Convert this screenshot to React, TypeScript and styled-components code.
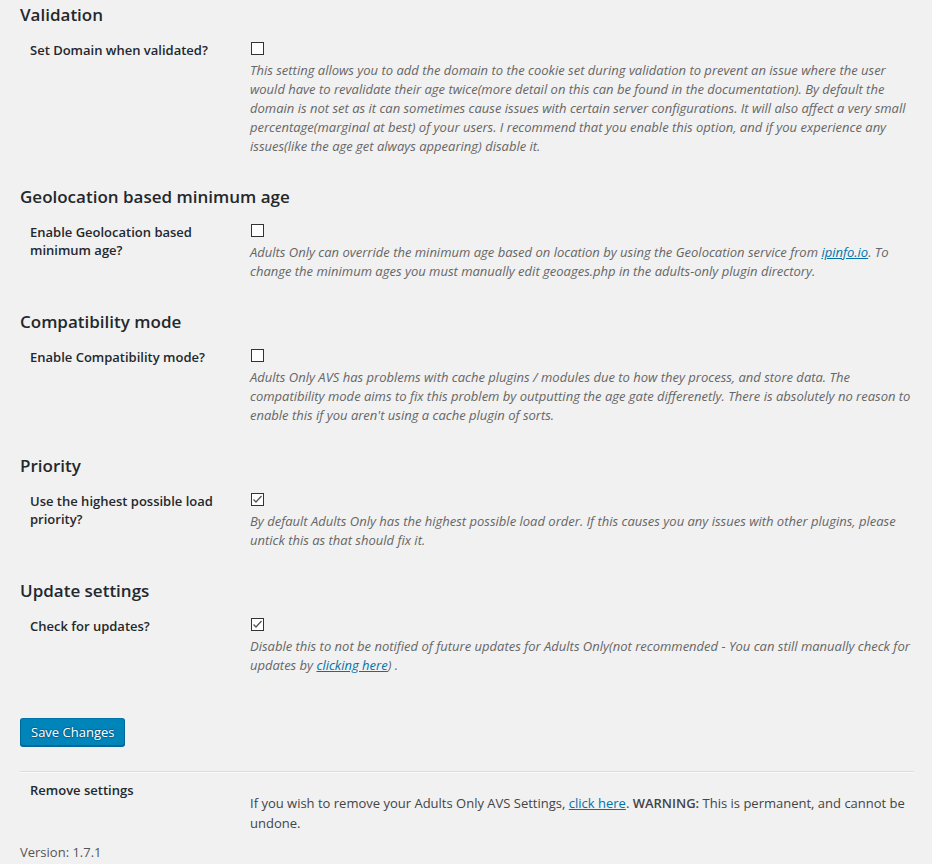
import React from 'react';
import styled, {createGlobalStyle} from 'styled-components';

const GlobalStyle = createGlobalStyle`
  html, body {
    margin: 0;
    padding: 0;
    background: #f1f1f1;
  }
  body {
    font-family: "Open Sans", "Liberation Sans", sans-serif;
    font-size: 13px;
    color: #444;
  }
`;

const Link = styled.a`
  color: #0073aa;
  text-decoration: underline;
`;

interface Setting {
    title: string,
    label: string,
    checked: boolean,
    description: React.ReactNode
}

const settings: Setting[] = [
    {
        title: 'Validation',
        label: 'Set Domain when validated?',
        checked: false,
        description: <>This setting allows you to add the domain to the cookie set during validation to prevent an issue where the user would have to revalidate their age twice(more detail on this can be found in the documentation). By default the domain is not set as it can sometimes cause issues with certain server configurations. It will also affect a very small percentage(marginal at best) of your users. I recommend that you enable this option, and if you experience any issues(like the age get always appearing) disable it.</>
    },
    {
        title: 'Geolocation based minimum age',
        label: 'Enable Geolocation based minimum age?',
        checked: false,
        description: <>Adults Only can override the minimum age based on location by using the Geolocation service from <Link href="#">ipinfo.io</Link>. To change the minimum ages you must manually edit geoages.php in the adults-only plugin directory.</>
    },
    {
        title: 'Compatibility mode',
        label: 'Enable Compatibility mode?',
        checked: false,
        description: <>Adults Only AVS has problems with cache plugins / modules due to how they process, and store data. The compatibility mode aims to fix this problem by outputting the age gate differenetly. There is absolutely no reason to enable this if you aren't using a cache plugin of sorts.</>
    },
    {
        title: 'Priority',
        label: 'Use the highest possible load priority?',
        checked: true,
        description: <>By default Adults Only has the highest possible load order. If this causes you any issues with other plugins, please untick this as that should fix it.</>
    },
    {
        title: 'Update settings',
        label: 'Check for updates?',
        checked: true,
        description: <>Disable this to not be notified of future updates for Adults Only(not recommended - You can still manually check for updates by <Link href="#">clicking here</Link>) .</>
    }
];

const Checkbox: React.FC<{checked: boolean}> = ({checked}) => (
    <StyledCheckbox>
        {checked &&
            <svg width="11" height="11" viewBox="0 0 11 11">
                <polyline points="1.5,5.5 4,8 9.5,2" fill="none" stroke="#555" strokeWidth="1.3"/>
            </svg>
        }
    </StyledCheckbox>
);

const App: React.FC = () => {
    return (
        <StyledPage>
            <GlobalStyle/>
            {settings.map((s, i) => (
                <section key={s.title}>
                    <StyledHeading $first={i === 0}>{s.title}</StyledHeading>
                    <StyledRow>
                        <StyledLabel>{s.label}</StyledLabel>
                        <StyledField>
                            <Checkbox checked={s.checked}/>
                            <StyledDescription>{s.description}</StyledDescription>
                        </StyledField>
                    </StyledRow>
                </section>
            ))}
            <StyledButton type="button">Save Changes</StyledButton>
            <StyledDivider/>
            <StyledRemoveRow>
                <StyledLabel>Remove settings</StyledLabel>
                <StyledRemoveText>
                    If you wish to remove your Adults Only AVS Settings, <Link href="#">click here</Link>. <strong>WARNING:</strong> This is permanent, and cannot be undone.
                </StyledRemoveText>
            </StyledRemoveRow>
            <StyledVersion>Version: 1.7.1</StyledVersion>
        </StyledPage>
    )
}

const StyledPage = styled.div`
  padding: 0 18px 12px 20px;
`;

const StyledHeading = styled.h2<{$first?: boolean}>`
  margin: ${props => props.$first ? '4px' : '30px'} 0 0 0;
  font-size: 17px;
  line-height: 22px;
  font-weight: 600;
  color: #23282d;
`;

const StyledRow = styled.div`
  display: flex;
  padding-top: 15px;
`;

const StyledLabel = styled.div`
  width: 200px;
  flex-shrink: 0;
  padding: 0 10px;
  font-size: 13px;
  line-height: 18px;
  font-weight: 600;
  color: #23282d;
`;

const StyledField = styled.div`
  flex: 1;
  padding-left: 10px;
`;

const StyledCheckbox = styled.span`
  display: flex;
  align-items: center;
  justify-content: center;
  box-sizing: border-box;
  width: 13px;
  height: 13px;
  margin: 1px 0 0 1px;
  border: 1px solid #333;
  background: #fff;
`;

const StyledDescription = styled.p`
  margin: 6px 0 0 0;
  font-size: 13px;
  line-height: 19px;
  font-style: italic;
  color: #666;
`;

const StyledButton = styled.button`
  display: block;
  margin-top: 43px;
  height: 28px;
  padding: 0 10px 1px;
  font-family: "Open Sans", "Liberation Sans", sans-serif;
  font-size: 13px;
  line-height: 26px;
  color: #fff;
  background: #0085ba;
  border: 1px solid;
  border-color: #0073aa #006799 #006799;
  border-radius: 3px;
  box-shadow: 0 1px 0 #006799;
  text-shadow: 0 -1px 1px #006799, 1px 0 1px #006799, 0 1px 1px #006799, -1px 0 1px #006799;
`;

const StyledDivider = styled.hr`
  margin: 25px 0 0 0;
  border: none;
  border-top: 1px solid #dcdcdc;
  border-bottom: 1px solid #fafafa;
`;

const StyledRemoveRow = styled.div`
  display: flex;
  padding-top: 8px;
`;

const StyledRemoveText = styled.div`
  flex: 1;
  padding-left: 10px;
  margin-top: 12px;
  font-size: 13px;
  line-height: 20px;
  color: #444;

  strong {
    font-weight: 600;
  }
`;

const StyledVersion = styled.div`
  margin-top: 10px;
  font-size: 13px;
  line-height: 19px;
  color: #555;
`;

export default App;
